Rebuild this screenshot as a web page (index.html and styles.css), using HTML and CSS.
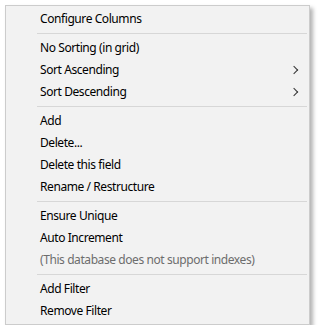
FILE: index.html
```html
<!DOCTYPE html>
<html>
<head>
    <link rel="stylesheet" href="styles.css">
</head>
<body>
    <div class="menu">
        <div class="menu-item">Configure Columns</div>
        <div class="menu-sep"></div>
        <div class="menu-item">No Sorting (in grid)</div>
        <div class="menu-item has-sub">Sort Ascending</div>
        <div class="menu-item has-sub">Sort Descending</div>
        <div class="menu-sep"></div>
        <div class="menu-item">Add</div>
        <div class="menu-item">Delete...</div>
        <div class="menu-item">Delete this field</div>
        <div class="menu-item">Rename / Restructure</div>
        <div class="menu-sep"></div>
        <div class="menu-item">Ensure Unique</div>
        <div class="menu-item">Auto Increment</div>
        <div class="menu-item disabled">(This database does not support indexes)</div>
        <div class="menu-sep"></div>
        <div class="menu-item">Add Filter</div>
        <div class="menu-item">Remove Filter</div>
    </div>
</body>
</html>
```

FILE: styles.css
```css
* {
    margin: 0;
    padding: 0;
    box-sizing: border-box;
}

body {
    background: #ffffff;
    font-family: 'Noto Sans', 'Open Sans', sans-serif;
    font-size: 12px;
    letter-spacing: -0.42px;
    color: #000000;
}

.menu {
    width: 305px;
    margin: 5px 0 0 5px;
    padding: 2px 2px;
    background: #f2f2f2;
    border: 1px solid #cccccc;
    box-shadow: 3px 3px 4px rgba(0, 0, 0, 0.3);
}

.menu-item {
    height: 22px;
    line-height: 22px;
    padding-left: 32px;
    position: relative;
}

.menu-item.disabled {
    color: #6d6d6d;
}

/* submenu chevron */
.has-sub::after {
    content: '';
    position: absolute;
    right: 10px;
    top: 8px;
    width: 5px;
    height: 5px;
    border-top: 1px solid #333333;
    border-right: 1px solid #333333;
    transform: rotate(45deg);
}

.menu-sep {
    height: 1px;
    margin: 3px 0 3px 29px;
    background: #d7d7d7;
}
```
